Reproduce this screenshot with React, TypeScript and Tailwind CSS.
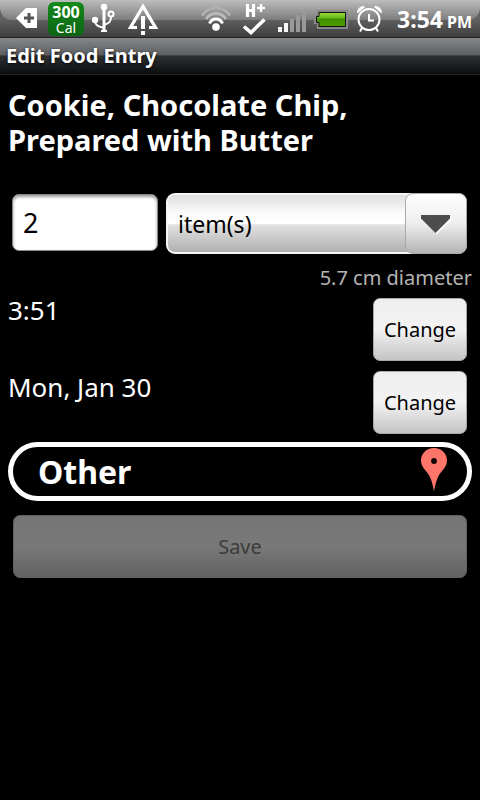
import { useState } from "react";
import type { ReactNode } from "react";

function StatusIcon({ x, w, children }: { x: number; w: number; children: ReactNode }) {
  return (
    <svg width={w} height={38} viewBox={`${x} 0 ${w} 38`} className="shrink-0" aria-hidden="true">
      {children}
    </svg>
  );
}

function StatusBar() {
  return (
    <header className="relative flex h-[38px] items-start justify-between border-b border-[#222] bg-gradient-to-b from-[#585858] via-[#626262] to-[#3e3e3e] pr-2 pl-4">
      <div className="absolute inset-x-0 top-0 h-5 rounded-b-xl bg-gradient-to-b from-[#bdbdbd] to-[#7d7d7d]" />
      <div className="relative flex items-start">
        <StatusIcon x={16} w={22}>
          <path d="M16 18 26 8H37V28H26Z" fill="#fff" />
          <path d="M29 13v10M24 18h10" stroke="#555" strokeWidth="3" />
        </StatusIcon>
        <div className="mt-0.5 ml-2.5 flex h-[34px] w-9 flex-col items-center rounded-md bg-gradient-to-b from-[#138a1b] to-[#0d6413] text-white">
          <span className="mt-px text-base leading-[18px] font-bold">300</span>
          <span className="text-sm leading-[14px]">Cal</span>
        </div>
        <div className="ml-2 flex gap-3">
          <StatusIcon x={92} w={23}>
            <g fill="none" stroke="#fff">
              <path d="M104 8V31" strokeWidth="3" />
              <path d="M101 31h6" strokeWidth="2" />
              <path d="M95 20c0 6 3 6 9 8M111 17c0 5-2 6-7 8" strokeWidth="2" />
              <circle cx="111" cy="14" r="2.500" strokeWidth="2" />
            </g>
            <circle cx="104" cy="7" r="3.200" fill="#fff" />
            <circle cx="95" cy="20" r="3.200" fill="#fff" />
          </StatusIcon>
          <StatusIcon x={127} w={33}>
            <path
              d="M137 27.500H130.500L143 6.500 155.500 27.500H149"
              fill="none"
              stroke="#fff"
              strokeWidth="3.200"
            />
            <path d="M143 16V29M143 31v4" stroke="#fff" strokeWidth="4" />
          </StatusIcon>
        </div>
      </div>
      <div className="relative flex items-start text-white">
        <StatusIcon x={200} w={32}>
          <g fill="none" strokeWidth="3">
            <path d="M202 15.500C209 5 223 5 230 15.500" stroke="#b0b0b0" />
            <path d="M206 19C211 11.500 221 11.500 226 19" stroke="#bababa" />
            <path d="M209.500 23.500C212 17.500 220 17.500 222.500 23.500" stroke="#fff" />
          </g>
          <circle cx="216" cy="27" r="3.800" fill="#fff" />
        </StatusIcon>
        <div className="ml-2.5">
          <StatusIcon x={242} w={24}>
            <path d="M247.500 4V17M253.500 4V17M247.500 10.500h6" stroke="#fff" strokeWidth="3.200" />
            <path d="M261 4v8M257 8h8" stroke="#fff" strokeWidth="2.400" />
            <path d="M244 26.500 251 32.500 264.500 19.500" fill="none" stroke="#fff" strokeWidth="3.600" />
          </StatusIcon>
        </div>
        <div className="ml-3">
          <StatusIcon x={278} w={28}>
            <path d="M278 27h4v5h-4ZM284 23h4v9h-4Z" fill="#f5f5f5" />
            <path d="M290 19h4v13h-4ZM296 15h4v17h-4ZM302 11h4v21h-4Z" fill="#999" />
          </StatusIcon>
        </div>
        <div className="ml-2">
          <StatusIcon x={313} w={34}>
            <defs>
              <linearGradient id="charge" x1="0" y1="0" x2="0" y2="1">
                <stop offset="0" stopColor="#9bdb35" />
                <stop offset=".4" stopColor="#68b81c" />
                <stop offset=".45" stopColor="#3f9300" />
                <stop offset="1" stopColor="#4c9a00" />
              </linearGradient>
            </defs>
            <path d="M316 10H347V29H316V24H313V15H316Z" fill="#888" />
            <path d="M318 12.500H344.500V26.500H318V22.500H315.500V16.500H318Z" fill="url(#charge)" stroke="#111" />
          </StatusIcon>
        </div>
        <div className="ml-2">
          <StatusIcon x={355} w={27}>
            <g fill="none" stroke="#fff" strokeWidth="2">
              <circle cx="368" cy="19.500" r="10.500" />
              <path d="M361 28l-2 3.500M375 28l2 3.500M368 14v6.500h5" />
            </g>
            <path d="M356 13c0-4 3-7 7-7l1 1-7 6ZM381 13c0-4-3-7-7-7l-1 1 7 6Z" fill="#fff" />
          </StatusIcon>
        </div>
        <div className="ml-3.5 flex items-baseline gap-1 leading-[38px] font-bold">
          <span className="text-[23px]">3:54</span>
          <span className="text-base">PM</span>
        </div>
      </div>
    </header>
  );
}

function ChangeButton({ label }: { label: string }) {
  return (
    <button
      type="button"
      aria-label={label}
      className="h-[63px] w-[94px] rounded-[7px] border border-[#a8a8a8] bg-gradient-to-b from-[#eee] via-[#f3f3f3] to-[#c4c4c4] text-xl text-black"
    >
      Change
    </button>
  );
}

export default function App() {
  const [amount, setAmount] = useState("2");
  return (
    <div className="min-h-screen bg-black font-['Noto_Sans',sans-serif] text-white">
      <StatusBar />
      <div className="h-[37px] border-b border-[#222426] bg-[linear-gradient(#85888b,#5c5e60_48%,#303234_49%,#0b0c0d)] px-1.5 text-xl leading-[36px] font-bold [text-shadow:0_1px_3px_#000]">
        Edit Food Entry
      </div>
      <main className="px-2 pt-3">
        <h1 className="text-[29px] leading-[35px] font-bold">
          Cookie, Chocolate Chip, Prepared with Butter
        </h1>
        <div className="mt-9 flex gap-2 pr-[5px] pl-1">
          <input
            aria-label="Amount"
            value={amount}
            onChange={(e) => setAmount(e.target.value)}
            className="mt-px h-[57px] w-[146px] rounded-[7px] border border-[#888] bg-white px-2.5 text-[27px] text-black shadow-[inset_0_2px_3px_#999]"
          />
          <div className="relative flex-1">
            <select
              aria-label="Unit"
              className="block h-[61px] w-full appearance-none rounded-[9px] border-2 border-[#f4f4f4] bg-[linear-gradient(#dedede,#fafafa_30%,#fff_51%,#e2e2e2_52%,#b0b0b0)] px-2.5 pt-0.5 text-[23px] text-black"
            >
              <option>item(s)</option>
            </select>
            <div className="pointer-events-none absolute inset-y-0 right-0 flex w-[62px] items-center justify-center rounded-[8px] border border-[#aaa] bg-gradient-to-b from-white via-[#eee] to-[#b5b5b5]">
              <svg width="30" height="20" viewBox="0 0 30 20" aria-hidden="true">
                <path d="M1 3H30V6L16 20Z" fill="#fff" />
                <path d="M0 1H29V4.500L14.500 19 0 4.500Z" fill="#4c4c4c" />
              </svg>
            </div>
          </div>
        </div>
        <p className="mt-2 text-right text-xl leading-8 text-[#b4b4b4]">5.7 cm diameter</p>
        <div className="mt-1 flex items-start justify-between pr-[5px]">
          <span className="text-[26px] leading-6">3:51</span>
          <ChangeButton label="Change time" />
        </div>
        <div className="mt-2.5 flex items-start justify-between pr-[5px]">
          <span className="mt-1 text-[26px] leading-6">Mon, Jan 30</span>
          <ChangeButton label="Change date" />
        </div>
        <button
          type="button"
          className="mt-2 flex h-[59px] w-full items-center justify-between rounded-full border-[5px] border-white bg-black pr-5 pl-[25px] text-[32px] leading-10 font-bold"
        >
          Other
          <svg width="26" height="48" viewBox="0 0 26 48" aria-hidden="true">
            <path
              d="M13 0C5.500 0 0 5.500 0 12.500c0 8 7 10 10 19 1 3 2 6 3 12 1-6 2-9 3-12 3-9 10-11 10-19C26 5.500 20.500 0 13 0Z"
              fill="#fe766a"
            />
            <circle cx="13" cy="13" r="2.900" fill="#100" />
          </svg>
        </button>
        <div className="mt-3.5 px-[5px]">
          <button
            type="button"
            disabled
            className="h-[63px] w-full rounded-[7px] border border-[#606060] bg-gradient-to-b from-[#747474] via-[#797979] to-[#626262] text-xl text-[#3c3c3c]"
          >
            Save
          </button>
        </div>
      </main>
    </div>
  );
}
